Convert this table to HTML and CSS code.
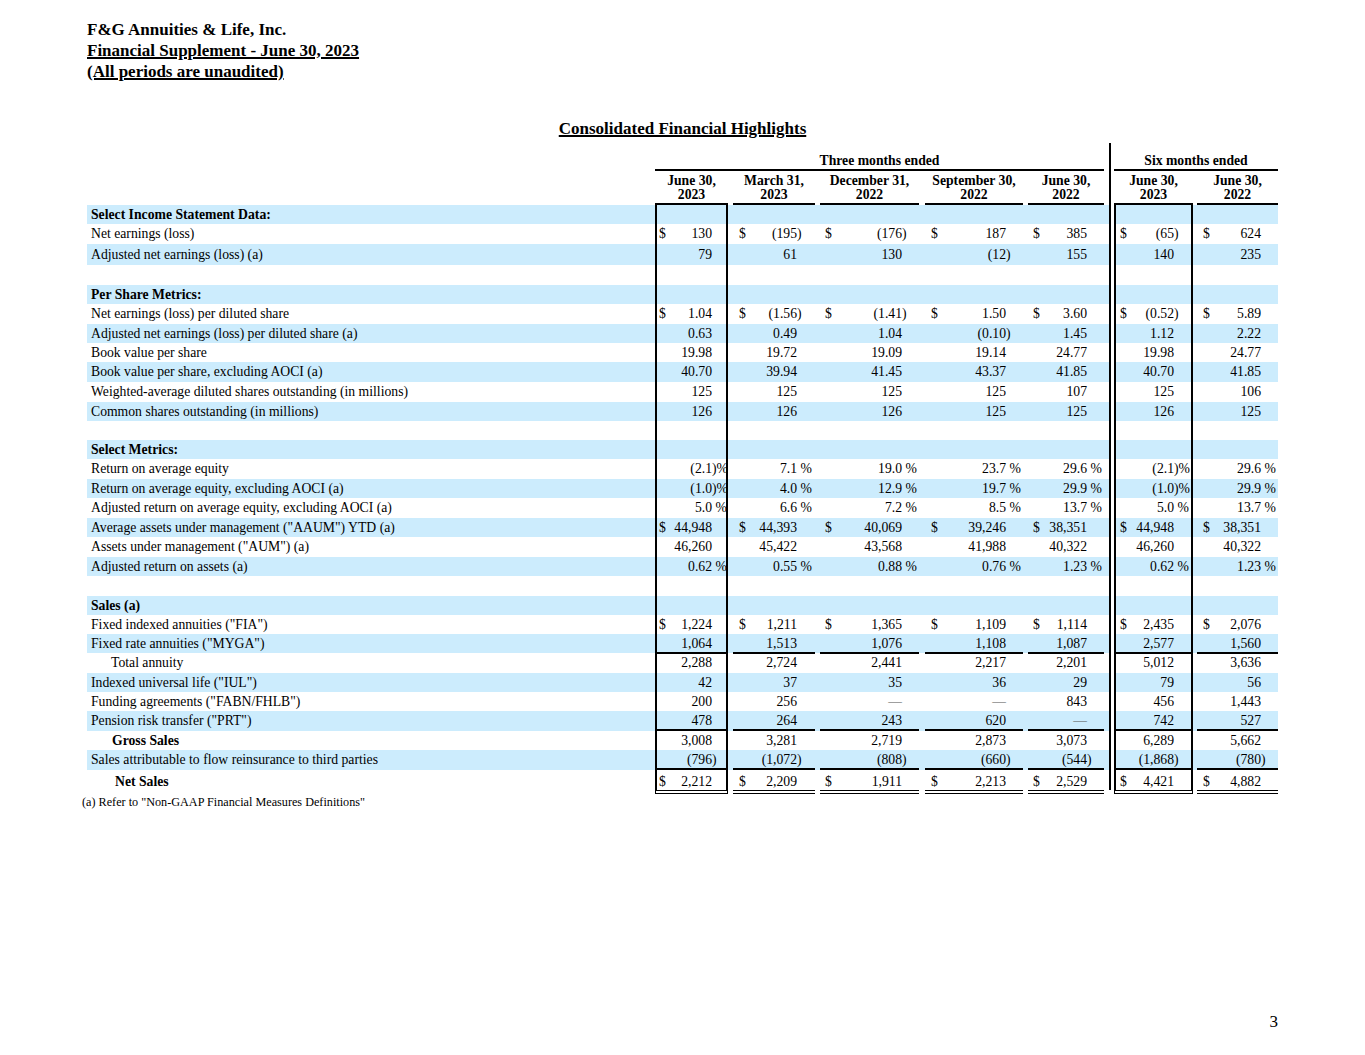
FILE: index.html
```html
<!DOCTYPE html>
<html lang="en">
<head>
<meta charset="utf-8">
<title>F&amp;G Annuities &amp; Life - Consolidated Financial Highlights</title>
<link rel="stylesheet" href="styles.css">
</head>
<body>
<header class="doc-head">
  <div>F&amp;G Annuities &amp; Life, Inc.</div>
  <div class="u">Financial Supplement - June 30, 2023</div>
  <div class="u">(All periods are unaudited)</div>
</header>
<h1 class="title">Consolidated Financial Highlights</h1>

<div class="tbl">
  <div class="row top"><div></div><div class="grp g3">Three months ended</div><div class="grp g6">Six months ended</div></div>
  <div class="row hd"><div></div><div>June 30,<br>2023</div><div>March 31,<br>2023</div><div>December 31,<br>2022</div><div>September 30,<br>2022</div><div>June 30,<br>2022</div><div>June 30,<br>2023</div><div>June 30,<br>2022</div></div>

  <div class="body">
    <div class="row"><div class="l h">Select Income Statement Data:</div><div class="c"></div><div class="c"></div><div class="c"></div><div class="c"></div><div class="c"></div><div class="c"></div><div class="c"></div></div>
    <div class="row r20"><div class="l">Net earnings (loss)</div><div class="c"><span class="d">$</span>130</div><div class="c"><span class="d">$</span>(195<span class="s">)</span></div><div class="c"><span class="d">$</span>(176<span class="s">)</span></div><div class="c"><span class="d">$</span>187</div><div class="c"><span class="d">$</span>385</div><div class="c"><span class="d">$</span>(65<span class="s">)</span></div><div class="c"><span class="d">$</span>624</div></div>
    <div class="row r21"><div class="l">Adjusted net earnings (loss) (a)</div><div class="c">79</div><div class="c">61</div><div class="c">130</div><div class="c">(12<span class="s">)</span></div><div class="c">155</div><div class="c">140</div><div class="c">235</div></div>
    <div class="row r20"><div class="l"></div><div class="c"></div><div class="c"></div><div class="c"></div><div class="c"></div><div class="c"></div><div class="c"></div><div class="c"></div></div>

    <div class="row"><div class="l h">Per Share Metrics:</div><div class="c"></div><div class="c"></div><div class="c"></div><div class="c"></div><div class="c"></div><div class="c"></div><div class="c"></div></div>
    <div class="row r20"><div class="l">Net earnings (loss) per diluted share</div><div class="c"><span class="d">$</span>1.04</div><div class="c"><span class="d">$</span>(1.56<span class="s">)</span></div><div class="c"><span class="d">$</span>(1.41<span class="s">)</span></div><div class="c"><span class="d">$</span>1.50</div><div class="c"><span class="d">$</span>3.60</div><div class="c"><span class="d">$</span>(0.52<span class="s">)</span></div><div class="c"><span class="d">$</span>5.89</div></div>
    <div class="row"><div class="l">Adjusted net earnings (loss) per diluted share (a)</div><div class="c">0.63</div><div class="c">0.49</div><div class="c">1.04</div><div class="c">(0.10<span class="s">)</span></div><div class="c">1.45</div><div class="c">1.12</div><div class="c">2.22</div></div>
    <div class="row"><div class="l">Book value per share</div><div class="c">19.98</div><div class="c">19.72</div><div class="c">19.09</div><div class="c">19.14</div><div class="c">24.77</div><div class="c">19.98</div><div class="c">24.77</div></div>
    <div class="row r20"><div class="l">Book value per share, excluding AOCI (a)</div><div class="c">40.70</div><div class="c">39.94</div><div class="c">41.45</div><div class="c">43.37</div><div class="c">41.85</div><div class="c">40.70</div><div class="c">41.85</div></div>
    <div class="row r20"><div class="l">Weighted-average diluted shares outstanding (in millions)</div><div class="c">125</div><div class="c">125</div><div class="c">125</div><div class="c">125</div><div class="c">107</div><div class="c">125</div><div class="c">106</div></div>
    <div class="row"><div class="l">Common shares outstanding (in millions)</div><div class="c">126</div><div class="c">126</div><div class="c">126</div><div class="c">125</div><div class="c">125</div><div class="c">126</div><div class="c">125</div></div>
    <div class="row"><div class="l"></div><div class="c"></div><div class="c"></div><div class="c"></div><div class="c"></div><div class="c"></div><div class="c"></div><div class="c"></div></div>

    <div class="row"><div class="l h">Select Metrics:</div><div class="c"></div><div class="c"></div><div class="c"></div><div class="c"></div><div class="c"></div><div class="c"></div><div class="c"></div></div>
    <div class="row r20"><div class="l">Return on average equity</div><div class="c">(2.1<span class="s">)%</span></div><div class="c">7.1<span class="s"> %</span></div><div class="c">19.0<span class="s"> %</span></div><div class="c">23.7<span class="s"> %</span></div><div class="c">29.6<span class="s"> %</span></div><div class="c">(2.1<span class="s">)%</span></div><div class="c">29.6<span class="s"> %</span></div></div>
    <div class="row"><div class="l">Return on average equity, excluding AOCI (a)</div><div class="c">(1.0<span class="s">)%</span></div><div class="c">4.0<span class="s"> %</span></div><div class="c">12.9<span class="s"> %</span></div><div class="c">19.7<span class="s"> %</span></div><div class="c">29.9<span class="s"> %</span></div><div class="c">(1.0<span class="s">)%</span></div><div class="c">29.9<span class="s"> %</span></div></div>
    <div class="row r20"><div class="l">Adjusted return on average equity, excluding AOCI (a)</div><div class="c">5.0<span class="s"> %</span></div><div class="c">6.6<span class="s"> %</span></div><div class="c">7.2<span class="s"> %</span></div><div class="c">8.5<span class="s"> %</span></div><div class="c">13.7<span class="s"> %</span></div><div class="c">5.0<span class="s"> %</span></div><div class="c">13.7<span class="s"> %</span></div></div>
    <div class="row"><div class="l">Average assets under management ("AAUM") YTD (a)</div><div class="c"><span class="d">$</span>44,948</div><div class="c"><span class="d">$</span>44,393</div><div class="c"><span class="d">$</span>40,069</div><div class="c"><span class="d">$</span>39,246</div><div class="c"><span class="d">$</span>38,351</div><div class="c"><span class="d">$</span>44,948</div><div class="c"><span class="d">$</span>38,351</div></div>
    <div class="row r20"><div class="l">Assets under management ("AUM") (a)</div><div class="c">46,260</div><div class="c">45,422</div><div class="c">43,568</div><div class="c">41,988</div><div class="c">40,322</div><div class="c">46,260</div><div class="c">40,322</div></div>
    <div class="row"><div class="l">Adjusted return on assets (a)</div><div class="c">0.62<span class="s"> %</span></div><div class="c">0.55<span class="s"> %</span></div><div class="c">0.88<span class="s"> %</span></div><div class="c">0.76<span class="s"> %</span></div><div class="c">1.23<span class="s"> %</span></div><div class="c">0.62<span class="s"> %</span></div><div class="c">1.23<span class="s"> %</span></div></div>
    <div class="row r20"><div class="l"></div><div class="c"></div><div class="c"></div><div class="c"></div><div class="c"></div><div class="c"></div><div class="c"></div><div class="c"></div></div>

    <div class="row"><div class="l h">Sales (a)</div><div class="c"></div><div class="c"></div><div class="c"></div><div class="c"></div><div class="c"></div><div class="c"></div><div class="c"></div></div>
    <div class="row"><div class="l">Fixed indexed annuities ("FIA")</div><div class="c"><span class="d">$</span>1,224</div><div class="c"><span class="d">$</span>1,211</div><div class="c"><span class="d">$</span>1,365</div><div class="c"><span class="d">$</span>1,109</div><div class="c"><span class="d">$</span>1,114</div><div class="c"><span class="d">$</span>2,435</div><div class="c"><span class="d">$</span>2,076</div></div>
    <div class="row ul"><div class="l">Fixed rate annuities ("MYGA")</div><div class="c">1,064</div><div class="c">1,513</div><div class="c">1,076</div><div class="c">1,108</div><div class="c">1,087</div><div class="c">2,577</div><div class="c">1,560</div></div>
    <div class="row r20"><div class="l i1">Total annuity</div><div class="c">2,288</div><div class="c">2,724</div><div class="c">2,441</div><div class="c">2,217</div><div class="c">2,201</div><div class="c">5,012</div><div class="c">3,636</div></div>
    <div class="row"><div class="l">Indexed universal life ("IUL")</div><div class="c">42</div><div class="c">37</div><div class="c">35</div><div class="c">36</div><div class="c">29</div><div class="c">79</div><div class="c">56</div></div>
    <div class="row"><div class="l">Funding agreements ("FABN/FHLB")</div><div class="c">200</div><div class="c">256</div><div class="c dash">—</div><div class="c dash">—</div><div class="c">843</div><div class="c">456</div><div class="c">1,443</div></div>
    <div class="row r20 ul"><div class="l">Pension risk transfer ("PRT")</div><div class="c">478</div><div class="c">264</div><div class="c">243</div><div class="c">620</div><div class="c dash">—</div><div class="c">742</div><div class="c">527</div></div>
    <div class="row"><div class="l h i2">Gross Sales</div><div class="c">3,008</div><div class="c">3,281</div><div class="c">2,719</div><div class="c">2,873</div><div class="c">3,073</div><div class="c">6,289</div><div class="c">5,662</div></div>
    <div class="row r20 ul"><div class="l">Sales attributable to flow reinsurance to third parties</div><div class="c">(796<span class="s">)</span></div><div class="c">(1,072<span class="s">)</span></div><div class="c">(808<span class="s">)</span></div><div class="c">(660<span class="s">)</span></div><div class="c">(544<span class="s">)</span></div><div class="c">(1,868<span class="s">)</span></div><div class="c">(780<span class="s">)</span></div></div>
    <div class="row r20 dl"><div class="l h i3">Net Sales</div><div class="c"><span class="d">$</span>2,212</div><div class="c"><span class="d">$</span>2,209</div><div class="c"><span class="d">$</span>1,911</div><div class="c"><span class="d">$</span>2,213</div><div class="c"><span class="d">$</span>2,529</div><div class="c"><span class="d">$</span>4,421</div><div class="c"><span class="d">$</span>4,882</div></div>
  </div>
</div>

<p class="fn">(a) Refer to "Non-GAAP Financial Measures Definitions"</p>
<div class="pg">3</div>
</body>
</html>
```

FILE: styles.css
```css
* {
  box-sizing: border-box;
}

html,
body {
  margin: 0;
  background: #fff;
}

body {
  padding: 19px 0 0 87px;
  font-family: "Liberation Serif", "Times New Roman", serif;
  font-size: 13.7px;
  color: #000;
}

.doc-head {
  font-size: 17px;
  font-weight: bold;
  line-height: 21px;
}

.doc-head .u {
  text-decoration: underline;
  text-decoration-thickness: 1.5px;
}

.title {
  width: 1191px;
  margin: 36px 0 4px;
  font-size: 17px;
  font-weight: bold;
  line-height: 21px;
  text-align: center;
  text-decoration: underline;
  text-decoration-thickness: 1.5px;
}

.tbl {
  width: 1191px;
}

.row {
  --bg: #fff;
  display: grid;
  grid-template-columns: 568px 73px 87px 104px 104px 81px 89px 85px;
  height: 19px;
  background:
    linear-gradient(#000, #000) 1022px 0 / 2px 100% no-repeat,
    linear-gradient(#fff, #fff) 1024px 0 / 3px 100% no-repeat,
    var(--bg);
}

.row.r20 {
  height: 20px;
}

.row.r21 {
  height: 21px;
}

.body .row:nth-child(odd) {
  --bg: #ccecfd;
}

/* column gaps */
.row > :nth-child(3) { margin-left: 5px; }
.row > :nth-child(4) { margin-left: 5px; }
.row > :nth-child(5) { margin-left: 6px; }
.row > :nth-child(6) { margin-left: 5px; }
.row > :nth-child(7) { margin-left: 10px; }
.row > :nth-child(8) { margin-left: 4px; }

/* group header */
.top {
  height: 28px;
}

.top .grp {
  align-self: end;
  font-weight: bold;
  line-height: 16px;
  text-align: center;
  border-bottom: 2px solid #000;
}

.top .g3 {
  grid-column: 2 / 7;
  margin-left: 0;
}

.top .g6 {
  grid-column: 7 / 9;
  margin-left: 10px;
}

/* column header */
.hd {
  height: 34px;
}

.hd > :not(:first-child) {
  padding-top: 3px;
  font-weight: bold;
  line-height: 14px;
  text-align: center;
  border-bottom: 2px solid #000;
}

/* labels */
.l {
  display: flex;
  align-items: center;
  padding-left: 4px;
  white-space: nowrap;
}

.l.h {
  font-weight: bold;
}

.l.i1 {
  padding-left: 24px;
}

.l.i2 {
  padding-left: 25px;
}

.l.i3 {
  padding-left: 28px;
}

/* value cells */
.c {
  display: flex;
  align-items: center;
  justify-content: flex-end;
  padding: 0 17px 0 5px;
  white-space: nowrap;
}

.body .row > :nth-child(2) {
  border-left: 2px solid #000;
  border-right: 2px solid #000;
  padding: 0 14px 0 2px;
}

.body .row > :nth-child(3) {
  padding: 0 18px 0 6px;
}

.body .row > :nth-child(5),
.body .row > :nth-child(8) {
  padding-left: 6px;
}

.body .row > :nth-child(7) {
  border-left: 2px solid #000;
  border-right: 2px solid #000;
  padding: 0 17px 0 4px;
}

.d {
  margin-right: auto;
}

.s {
  width: 17px;
  margin-right: -17px;
  white-space: pre;
}

.dash {
  color: #555;
}

.row.ul > .c {
  border-bottom: 2px solid #000;
  padding-top: 2px;
}

.row.dl > .c {
  border-bottom: 4px double #000;
  padding-top: 4px;
}

.fn {
  margin: 5px 0 0 -5px;
  font-size: 12.2px;
  line-height: 15px;
}

.pg {
  width: 1191px;
  margin-top: 202px;
  font-size: 17px;
  line-height: 20px;
  text-align: right;
}
```
